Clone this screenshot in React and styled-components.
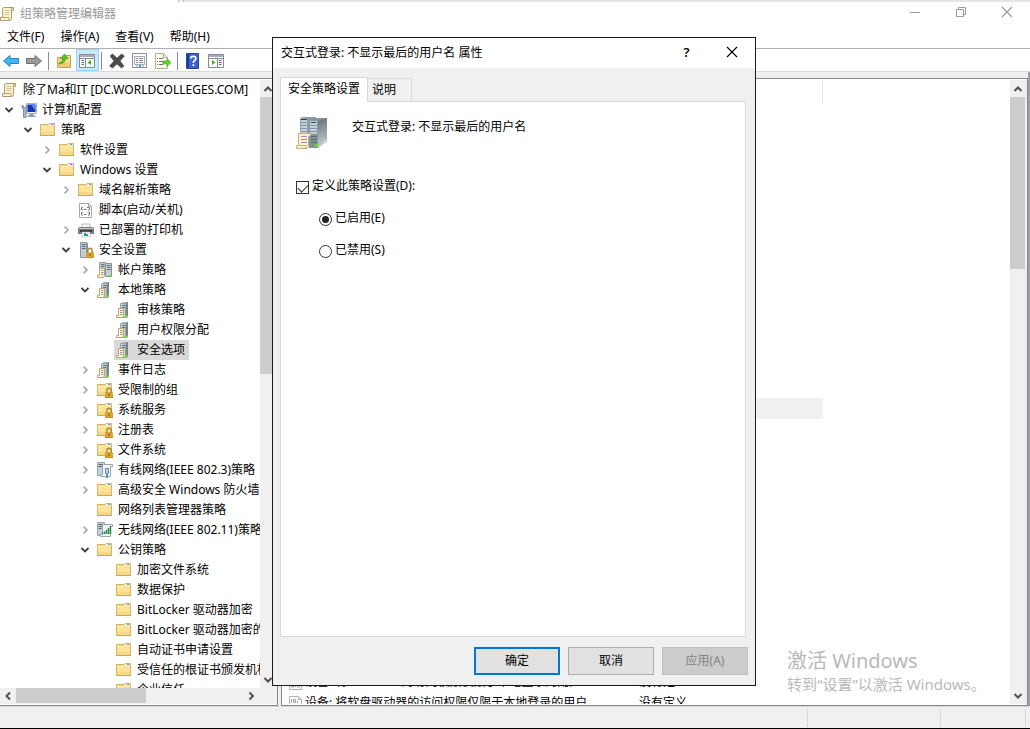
import React, { useState } from "react"
import styled, { createGlobalStyle, css } from "styled-components"

const GlobalStyle = createGlobalStyle`
  * {
    box-sizing: border-box;
  }

  body {
    margin: 0;
    overflow: hidden;
    background: #000;
    color: #000;
    font-family: "Noto Sans", "Noto Sans CJK SC", sans-serif;
    font-size: 12px;
    line-height: 20px;
  }

  button, input {
    font: inherit;
    color: inherit;
    margin: 0;
  }

  svg {
    display: block;
    flex: none;
  }
`

/* ---------- shared pieces ---------- */

const PlainButton = styled.button`
  display: flex;
  align-items: center;
  padding: 0;
  border: 0;
  background: transparent;
  white-space: nowrap;
`

/* ---------- window ---------- */

const Window = styled.div`
  position: relative;
  display: flex;
  flex-direction: column;
  height: calc(100vh - 1px);
  background: #f0f0f0;
`

const TopStrip = styled.div`
  display: flex;
  flex: none;
  height: 2px;
  background: #e5e5e5;
`

const StripTab = styled.div`
  width: ${props => props.$width}px;
  background: ${props => props.$color};
  border-right: 1px solid #b4b4b4;
`

const TitleBar = styled.header`
  display: flex;
  flex: none;
  height: 24px;
  background: #fff;
  color: #999;
`

const TitleText = styled.h1`
  display: flex;
  flex: 1;
  align-items: center;
  gap: 4px;
  margin: 0;
  font-size: 12px;
  font-weight: 400;
`

const CaptionButton = styled(PlainButton)`
  justify-content: center;
  width: ${props => props.$width || 46}px;
  height: ${props => props.$height || 20}px;
`

const MenuBar = styled.nav`
  display: flex;
  flex: none;
  gap: 16px;
  height: 23px;
  padding-left: 7px;
  background: #fff;
  border-bottom: 1px solid #b0b0b0;
`

const Toolbar = styled.div`
  display: flex;
  flex: none;
  height: 23px;
  background: #fff;
  border-bottom: 1px solid #dadada;
`

const ToolButton = styled(PlainButton)`
  justify-content: center;
  width: 23px;
  height: 22px;
  padding: 2px 1px 0 0;
  ${props =>
      props.$active &&
      css`
          background: #cce8ff;
          border: 1px solid #99d1ff;
      `}
`

const Separator = styled.div`
  width: 1px;
  height: 18px;
  margin: 3px 4px 0 2px;
  background: #8c8c8c;
`

const Content = styled.main`
  display: flex;
  flex: 1;
  gap: 3px;
  min-height: 0;
  padding: 6px 2px 0 0;
  background: linear-gradient(to left, #a0a0a4 2px, #f0f0f0 2px);
`

const Pane = styled.section`
  display: flex;
  min-width: 0;
  background: #fff;
  border: 1px solid #828790;
  padding: 1px 0;
`

const TreePane = styled(Pane)`
  flex: 0 0 278px;
  flex-direction: column;
  border-left: 0;
`

const ListPane = styled(Pane)`
  flex: 1;
`

/* ---------- scroll bars ---------- */

const Track = styled.div`
  display: flex;
  flex: none;
  flex-direction: ${props => (props.$horizontal ? "row" : "column")};
  ${props => (props.$horizontal ? "height: 15px;" : "width: 17px;")}
  background: #f0f0f0;
`

const TrackButton = styled(PlainButton)`
  flex: none;
  justify-content: center;
  width: ${props => (props.$horizontal ? 16 : 15)}px;
  height: ${props => (props.$horizontal ? 15 : 17)}px;

  &:last-child {
    margin-${props => (props.$horizontal ? "left" : "top")}: auto;
  }
`

const Thumb = styled.div`
  flex: none;
  background: #cdcdcd;
  ${props =>
      props.$horizontal
          ? `width: ${props.$size}px;`
          : `height: ${props.$size}px; width: 15px;`}
`

/* ---------- tree ---------- */

const TreeArea = styled.div`
  display: flex;
  flex: 1;
  min-height: 0;
`

const Tree = styled.ul`
  flex: 1;
  min-width: 0;
  margin: 0;
  padding: 0;
  overflow: hidden;
  list-style: none;
`

const TreeRow = styled.li`
  display: flex;
  height: 20px;
  padding-left: ${props => (props.$level ? props.$level * 19 - 18 : 0)}px;
`

const Expander = styled(PlainButton)`
  flex: none;
  justify-content: center;
  width: 16px;
  margin-right: 2px;
`

const ExpanderSpace = styled.span`
  flex: none;
  width: 16px;
  margin-right: 2px;
`

const TreeLabel = styled(PlainButton)`
  gap: 5px;
  padding: 0 4px 0 2px;
  background: ${props => (props.$selected ? "#d9d9d9" : "transparent")};
`

const HScrollRow = styled.div`
  display: flex;
  flex: none;
  flex-direction: column;
  height: 16px;
  padding-right: 18px;
  background: #f0f0f0;
`

/* ---------- policy list ---------- */

const ListArea = styled.div`
  flex: 1;
  min-width: 0;
  overflow: hidden;
`

const PolicyTable = styled.table`
  width: 541px;
  table-layout: fixed;
  border-collapse: separate;
  border-spacing: 0;

  th {
    height: 24px;
    padding: 0;
    border-right: 1px solid #e5e5e5;
  }

  td {
    height: 21px;
    padding: 0 0 0 6px;
    white-space: nowrap;
  }
`

const PolicyRow = styled.tr`
  background: ${props => (props.$selected ? "#f0f0f0" : "#fff")};
`

const PolicyName = styled.span`
  display: flex;
  align-items: center;
  height: 21px;
  gap: 1px;
`

/* ---------- status bar ---------- */

const StatusBar = styled.footer`
  display: flex;
  flex: none;
  height: 22px;
  padding: 2px 4px 1px 0;
  background: #f0f0f0;
  border-top: 1px solid #d7d7d7;
`

const StatusCell = styled.div`
  flex: ${props => (props.$width ? `0 0 ${props.$width}px` : "1")};
  border-right: 1px solid #d7d7d7;
`

const Watermark = styled.aside`
  position: absolute;
  right: 45px;
  bottom: 33px;
  width: 198px;
  color: #b9b9b9;
  font-size: 15px;
  line-height: 22px;
  white-space: nowrap;
`

const WatermarkTitle = styled.div`
  font-size: 20px;
  line-height: 24px;
`

/* ---------- dialog ---------- */

const Dialog = styled.div`
  position: absolute;
  top: 37px;
  left: 272px;
  display: flex;
  flex-direction: column;
  width: 484px;
  height: 649px;
  background: #f0f0f0;
  border: 1px solid #1a1a1a;
`

const DialogTitleBar = styled.div`
  display: flex;
  flex: none;
  height: 30px;
  padding: 0 1px 0 8px;
  background: #fff;
`

const DialogTitle = styled.h2`
  flex: 1;
  margin: 0;
  font-size: 12px;
  font-weight: 400;
  line-height: 30px;
`

const HelpMark = styled.span`
  font-size: 13px;
  font-weight: 600;
`

const Tabs = styled.div`
  display: flex;
  flex: none;
  align-items: flex-end;
  height: 33px;
  padding-left: 7px;
`

const Tab = styled.button`
  position: relative;
  height: ${props => (props.$active ? 25 : 23)}px;
  margin: 0 0 ${props => (props.$active ? -1 : 0)}px;
  padding: ${props => (props.$active ? "0 7px 2px 7px" : "0 15px 0 4px")};
  background: ${props => (props.$active ? "#fff" : "#f0f0f0")};
  border: 1px solid #d9d9d9;
  border-bottom: 0;
  border-left-width: ${props => (props.$active ? 1 : 0)}px;
  white-space: nowrap;
`

const Page = styled.div`
  flex: 1;
  margin: 0 9px 0 7px;
  padding: 15px;
  background: #fff;
  border: 1px solid #d9d9d9;
`

const PolicyHeading = styled.div`
  display: flex;
  gap: 24px;
  margin-bottom: 28px;
`

const Field = styled.label`
  display: flex;
  align-items: center;
  gap: 3px;
  width: max-content;
  height: 20px;
  margin: 0 0 12px ${props => (props.$nested ? 23 : 0)}px;
`

const FieldText = styled.span`
  padding-bottom: 2px;
`

const Checkbox = styled.input`
  appearance: none;
  width: 13px;
  height: 13px;
  border: 1px solid #333;
  background: #fff;

  &:checked::after {
    content: "";
    display: block;
    width: 9px;
    height: 5px;
    margin: 2px 0 0 1px;
    border: solid #333;
    border-width: 0 0 1px 1px;
    transform: rotate(-45deg);
  }
`

const Radio = styled.input`
  appearance: none;
  width: 13px;
  height: 13px;
  padding: 2px;
  border: 1px solid #333;
  border-radius: 50%;
  background: #fff;

  &:checked::after {
    content: "";
    display: block;
    width: 7px;
    height: 7px;
    border-radius: 50%;
    background: #222;
  }
`

const DialogButtons = styled.div`
  display: flex;
  flex: none;
  justify-content: flex-end;
  gap: 8px;
  padding: 10px 7px;
`

const DialogButton = styled.button`
  width: 86px;
  height: 28px;
  padding: 0 0 1px;
  background: #e1e1e1;
  border: ${props => (props.$primary ? "2px solid #0078d7" : "1px solid #adadad")};

  &:disabled {
    color: #838383;
    background: #ccc;
    border-color: #bfbfbf;
  }
`

/* ---------- icons ---------- */

const Svg = ({ size = 16, children }) => (
    <svg width={size} height={size} viewBox="0 0 16 16" fill="none" aria-hidden="true">
        {children}
    </svg>
)

const chevrons = {
    up: "M4.5 10 8 6.5 11.5 10",
    down: "M4.5 6 8 9.5 11.5 6",
    left: "M10 4.5 6.5 8 10 11.5",
    right: "M6.5 4.5 10 8 6.5 11.5",
}

const Chevron = ({ to, color = "#505050", width = 2 }) => (
    <Svg>
        <path d={chevrons[to]} stroke={color} strokeWidth={width} />
    </Svg>
)

const FolderShape = () => (
    <>
        <path d="M.5 13.5V2.5H8L9 1.5H14.5V13.5Z" fill="#f3d58a" stroke="#d6b468" />
        <path d="M9.5 2.5H13" stroke="#fff" />
        <path d="M11 2.5H13" stroke="#3d9be0" />
        <path d="M1 4H8.5L9.5 3H14V13H1Z" fill="#fde397" />
        <path d="M1 4.5H8.5L9.5 3.5H14" stroke="#fff0bd" />
        <path d="M1 10H14V13H1Z" fill="#f6d885" />
        <path d="M0 13.5H15" stroke="#c9a75c" />
    </>
)

const LockShape = () => (
    <>
        <path d="M9.8 11V8.5a2.2 2.2 0 0 1 4.4 0V11" stroke="#a98a3c" strokeWidth="1.4" />
        <path d="M8 10.5H16V16H8Z" fill="#c98f12" />
        <path d="M8 12H16M8 14H16" stroke="#edbd3f" />
        <path d="M12 11.5V14" stroke="#7a5405" />
    </>
)

const ServerShape = () => (
    <>
        <path d="M4 2 7 0H12V14L10 16H4Z" fill="#a7b5be" />
        <path d="M10 1 12 0V14L10 16Z" fill="#78858d" />
        <path d="M4.5 1.5H9.5V15.5H4.5Z" fill="#c6d2d9" stroke="#97a5ad" />
        <path d="M6 3.5H9M6 5.5H9" stroke="#5c6d76" />
        <path d="M9 13H11.5V15.5H9Z" fill="#61e515" />
    </>
)

const PaperShape = () => (
    <>
        <path d="M2.5 6.5H7.5V13.5L6.5 15.5H.5V13.5H2.5Z" fill="#fff8e2" stroke="#b8a478" />
        <path d="M4 8.5H6.5M4 10.5H6.5M4 12.5H6.5" stroke="#9b957e" />
    </>
)

const ScrollShape = () => (
    <>
        <path
            d="M4 1.5H13.5V4.5H11.5V12.5Q11.5 14.5 9.5 14.5H.5V11.5H2.5V3.5Q2.5 1.5 4 1.5Z"
            fill="#fff3cf"
            stroke="#b39d6f"
        />
        <path d="M11.5 4.5V2.5H13.5M2.5 11.5H9V14.5" stroke="#bba46f" />
        <path d="M4.5 4.5H9.5M4.5 6.5H9.5M4.5 8.5H9.5" stroke="#d3c49c" />
    </>
)

const icons = {
    scroll: <ScrollShape />,
    folder: <FolderShape />,
    lockedFolder: (
        <>
            <FolderShape />
            <LockShape />
        </>
    ),
    computer: (
        <>
            <path d="M5.5 1.5H15.5V11.5H5.5Z" fill="#e9edf4" stroke="#a9aeb8" />
            <path d="M6.5 2.5H14.5V10H6.5Z" fill="#1835b5" />
            <path d="M10 2.5H14.5V9Z" fill="#5d8bf0" />
            <path d="M8.5 12H12.5V13.5H14.5V15H6.5V13.5H8.5Z" fill="#9097a0" />
            <path d="M1 3.5V6L2.5 7V15.5H5V7L6.5 6V3.5H5.2V5.5H2.3V3.5Z" fill="#a8c0d3" stroke="#5c7386" strokeWidth=".7" />
        </>
    ),
    script: (
        <>
            <path d="M1.5 1.5H10.5L13.5 4.5V15.5H1.5Z" fill="#fff" stroke="#a6a6a6" />
            <path d="M10.5 1.5V4.5H13.5" stroke="#a6a6a6" />
            <path d="M5 5.5H3.5V8H5M9 5.5H11.5V8H10M5 10.5H3.5V13H5M9.5 10.5H11.5V13H10M6 7.5H8.5M6 12.5H8.5" stroke="#7d7d88" />
        </>
    ),
    printer: (
        <>
            <path d="M4 2H12V6H4Z" fill="#f6f6f6" stroke="#aaa" strokeWidth=".8" />
            <path d="M0 6 2 5H14L16 6V12H0Z" fill="#7b8085" />
            <path d="M1 6.5H15" stroke="#c3c7cb" />
            <path d="M2 9H14" stroke="#3a3d40" strokeWidth="2" />
            <path d="M4 10H12V15H4Z" fill="#fff" stroke="#aaa" strokeWidth=".6" />
            <path d="M6 11H8V14H6Z" fill="#2694c5" />
            <path d="M8 12H10V14H8Z" fill="#2da35c" />
        </>
    ),
    lockedServer: (
        <>
            <path d="M2.5.5H8.5V15.5H2.5Z" fill="#c1cdd4" stroke="#8b989f" />
            <path d="M8 1H10V15H8Z" fill="#8b979e" />
            <path d="M4 2.5H7.5M4 4.5H7.5M4 6.5H7.5" stroke="#54656f" />
            <LockShape />
        </>
    ),
    serverPaper: (
        <>
            <ServerShape />
            <PaperShape />
        </>
    ),
    servers: (
        <>
            <path d="M2.5.5H8.5V12H2.5Z" fill="#bfcbd3" stroke="#8f9ca4" />
            <path d="M4 2.5H7.5M4 4.5H7.5" stroke="#5f7079" />
            <path d="M8.5 1.5H14.5V14.5H8.5Z" fill="#c3d0d7" stroke="#839099" />
            <path d="M10 3.5H13.5M10 5.5H13.5M10 7.5H13.5" stroke="#5f7079" />
            <path d="M12 13H14.5V15H12Z" fill="#61e515" />
            <PaperShape />
        </>
    ),
    wired: (
        <>
            <path d="M.5.5H7.5V13.5H.5Z" fill="#c3cfd6" stroke="#9aa5ab" />
            <path d="M1.5 2.5H5.5M1.5 4.5H5.5" stroke="#54646e" />
            <path d="M5.5 2.5H15.5V4.5H13.5V14.5H3.5V12.5H5.5Z" fill="#f1f3f5" stroke="#9fa5aa" />
            <path d="M8.5 6.5H11.5V11.5H8.5Z" fill="#c7d7e6" stroke="#6d85a8" />
            <path d="M10 11V16" stroke="#4c97d6" strokeWidth="2" />
        </>
    ),
    wireless: (
        <>
            <path d="M.5.5H7.5V13.5H.5Z" fill="#c3cfd6" stroke="#9aa5ab" />
            <path d="M1.5 2.5H5.5M1.5 4.5H5.5M1.5 6.5H4.5" stroke="#54646e" />
            <path d="M5.5 2.5H15.5V4.5H13.5V14.5H3.5V12.5H5.5Z" fill="#eef3ec" stroke="#9fa5aa" />
            <path d="M5.5 12V10.5M7.5 12V9.5M9.5 12V8M11.5 12V6M13.5 12V4" stroke="#208443" strokeWidth="1.4" />
        </>
    ),
    policy: (
        <>
            <path d="M1.5 1.5H10.5L13.5 4.5V15.5H1.5Z" fill="#fff" stroke="#b4b4b4" />
            <path d="M10.5 1.5V4.5H13.5" stroke="#b4b4b4" />
            <path d="M3.5 4V7.5M5.5 4.5H7.5V7.5H5.5ZM9.5 6V8M3.5 10H5.5V13H3.5ZM7.5 9.5V13M9.5 10H11.5V13H9.5Z" stroke="#9a9a9a" />
        </>
    ),
    back: (
        <path d="M.5 8 7 2.5V5.5H15.5V10.5H7V13.5Z" fill="#3fb6f2" stroke="#2a7fbe" />
    ),
    forward: (
        <path d="M15.5 8 9 2.5V5.5H.5V10.5H9V13.5Z" fill="#9a9a9a" stroke="#707070" />
    ),
    folderUp: (
        <>
            <path d="M1.5 14.5V4.5H8L9.5 2.5H14.5V14.5Z" fill="#f6d98c" stroke="#c7a255" />
            <path d="M2 10H14V14H2Z" fill="#efca74" />
            <path d="M3 10Q7 9 7 5.5H4.5L8.5 1 12 5.5H9.5Q9 10.5 3 11Z" fill="#54c91b" stroke="#2d8b0a" strokeWidth=".6" />
        </>
    ),
    treeView: (
        <>
            <path d="M.5 1.5H15.5V14.5H.5Z" fill="#fff" stroke="#858c97" />
            <path d="M1 2H15V4H1Z" fill="#a5adba" />
            <path d="M1 5.5H15M6.5 6V14" stroke="#858c97" />
            <path d="M2.5 7.5H5M2.5 9.5H5M2.5 11.5H5" stroke="#606a78" />
            <path d="M12 7V12L8.5 9.5Z" fill="#39b51b" />
        </>
    ),
    remove: (
        <path
            d="M1 3 3.5 1 8 5 12.5 1 15.5 3 11 8 15 13 12.5 15 8 11 3.5 15 .5 13 5 8Z"
            fill="#4c4c4c"
            stroke="#333"
            strokeWidth=".5"
        />
    ),
    properties: (
        <>
            <path d="M.5.5H14.5V14.5H.5Z" fill="#fff" stroke="#8b8f96" />
            <path d="M2.5 3.5H12.5V11.5H2.5Z" fill="#f4f5f7" stroke="#a4a8af" />
            <path d="M4 5.5H6M7 5.5H11M4 7.5H6M7 7.5H11M4 9.5H6M7 9.5H11" stroke="#8b909a" />
            <path d="M4 13H6M10 13H12" stroke="#999" />
            <path d="M7 13H9" stroke="#21b7e8" strokeWidth="2" />
        </>
    ),
    exportList: (
        <>
            <path d="M.5.5H8.5L12.5 4.5V15.5H.5Z" fill="#fffbea" stroke="#b5ac92" />
            <path d="M8.5.5V4.5H12.5" stroke="#b5ac92" />
            <path d="M2 5.5H3M4 5.5H8M2 8.5H3M4 8.5H8M2 11.5H3M4 11.5H8" stroke="#6d6b7d" />
            <path d="M8 8H12V5.5L16 9.5 12 13.5V11H8Z" fill="#62d331" stroke="#39a715" strokeWidth=".6" />
        </>
    ),
    help: (
        <>
            <path d="M1.5.5H13.5V15.5H1.5Z" fill="#3a62cf" stroke="#2a449a" />
            <path d="M2 1H4V15H2Z" fill="#1f3b98" />
            <path d="M5.7 5.5Q5.7 3.3 8.3 3.3T10.9 5.5Q10.9 7 9.3 7.8 8.3 8.4 8.3 10" stroke="#fff" strokeWidth="1.7" />
            <path d="M7.5 11.2H9.3V13H7.5Z" fill="#fff" />
        </>
    ),
    actionPane: (
        <>
            <path d="M.5 1.5H15.5V14.5H.5Z" fill="#fff" stroke="#858c97" />
            <path d="M1 2H15V4H1Z" fill="#a5adba" />
            <path d="M1 5.5H15M9.5 6V14" stroke="#858c97" />
            <path d="M11 7.5H13.5M11 9.5H13.5M11 11.5H13.5" stroke="#606a78" />
            <path d="M4 7V12L7.5 9.5Z" fill="#39b51b" />
        </>
    ),
    minimize: <path d="M3 8.5H13" stroke="#999" />,
    restore: <path d="M3.5 5.5H10.5V12.5H3.5ZM5.5 5V3.5H12.5V10.5H11" stroke="#999" />,
    close: <path d="M3 3 13 13M13 3 3 13" stroke="currentColor" strokeWidth="1.1" />,
}

const Icon = ({ name }) => <Svg>{icons[name]}</Svg>

const ServerGroup = () => (
    <svg width="32" height="32" viewBox="0 0 32 32" fill="none" aria-hidden="true">
        <path d="M4 1 8 0H20V26H4Z" fill="#8c9aa2" />
        <path d="M4.5 1.5H11.5V24.5H4.5Z" fill="#c3d1d9" stroke="#94a3ac" />
        <path d="M5 2.5H11" stroke="#34444c" />
        <path d="M5 5.5H11M5 8.5H11M5 11.5H11M5 14.5H11" stroke="#8798a2" />
        <path d="M13 3 21 1H31V24L22 31H13Z" fill="#85939b" />
        <path d="M22 4 31 1V24L22 31Z" fill="url(#side)" />
        <path d="M13.5 3.5H21.5V30.5H13.5Z" fill="#c0cfd7" stroke="#8796a0" />
        <path d="M15 5.5H20" stroke="#34444c" />
        <path d="M14 8.5H21M14 11.5H21M14 14.5H21" stroke="#8798a2" />
        <path d="M14 17H21V30H14Z" fill="#7f919b" />
        <path d="M15 19.5H21M15 22.5H21M15 25.5H21" stroke="#596b76" />
        <path d="M19 27H22V30H19Z" fill="#61e515" />
        <path d="M25 26 30 22M25 28 30 24" stroke="#d0d6d9" />
        <path d="M2.5 16.5H14.5V19H12.5V29.5L11 31.5H.5V28.5H2.5Z" fill="#fff0c9" stroke="#c4af7c" />
        <path d="M5 19.5H11M5 22.5H11M5 25.5H11" stroke="#9990b2" />
        <path d="M3 28.5H10V31" stroke="#c7af77" />
        <defs>
            <linearGradient id="side" x1="22" y1="2" x2="31" y2="28" gradientUnits="userSpaceOnUse">
                <stop stopColor="#69757b" />
                <stop offset="1" stopColor="#c5ccd0" />
            </linearGradient>
        </defs>
    </svg>
)

/* ---------- data ---------- */

const menus = ["文件(F)", "操作(A)", "查看(V)", "帮助(H)"]

const tools = [
    ["back", "后退"],
    ["forward", "前进"],
    null,
    ["folderUp", "上一级"],
    ["treeView", "显示/隐藏控制台树"],
    null,
    ["remove", "删除"],
    ["properties", "属性"],
    ["exportList", "导出列表"],
    null,
    ["help", "帮助"],
    ["actionPane", "显示/隐藏操作窗格"],
]

// level, icon, text, expander state
const nodes = [
    [0, "scroll", "除了Ma和IT [DC.WORLDCOLLEGES.COM]"],
    [1, "computer", "计算机配置", "open"],
    [2, "folder", "策略", "open"],
    [3, "folder", "软件设置", "closed"],
    [3, "folder", "Windows 设置", "open"],
    [4, "folder", "域名解析策略", "closed"],
    [4, "script", "脚本(启动/关机)"],
    [4, "printer", "已部署的打印机", "closed"],
    [4, "lockedServer", "安全设置", "open"],
    [5, "servers", "帐户策略", "closed"],
    [5, "serverPaper", "本地策略", "open"],
    [6, "serverPaper", "审核策略"],
    [6, "serverPaper", "用户权限分配"],
    [6, "serverPaper", "安全选项"],
    [5, "serverPaper", "事件日志", "closed"],
    [5, "lockedFolder", "受限制的组", "closed"],
    [5, "lockedFolder", "系统服务", "closed"],
    [5, "lockedFolder", "注册表", "closed"],
    [5, "lockedFolder", "文件系统", "closed"],
    [5, "wired", "有线网络(IEEE 802.3)策略", "closed"],
    [5, "folder", "高级安全 Windows 防火墙", "closed"],
    [5, "folder", "网络列表管理器策略"],
    [5, "wireless", "无线网络(IEEE 802.11)策略", "closed"],
    [5, "folder", "公钥策略", "open"],
    [6, "folder", "加密文件系统"],
    [6, "folder", "数据保护"],
    [6, "folder", "BitLocker 驱动器加密"],
    [6, "folder", "BitLocker 驱动器加密的"],
    [6, "folder", "自动证书申请设置"],
    [6, "folder", "受信任的根证书颁发机构"],
    [6, "folder", "企业信任"],
]

const SELECTED_POLICY = 14

const policies = Array.from({ length: 27 }, () => null).concat([
    { name: "设备: 将 CD-ROM 的访问权限仅限于本地登录的用户", setting: "没有定义" },
    { name: "设备: 将软盘驱动器的访问权限仅限于本地登录的用户", setting: "没有定义" },
])

/* ---------- components ---------- */

const ScrollBar = ({ horizontal, size }) => (
    <Track $horizontal={horizontal}>
        <TrackButton $horizontal={horizontal} tabIndex={-1} aria-label={horizontal ? "向左" : "向上"}>
            <Chevron to={horizontal ? "left" : "up"} />
        </TrackButton>
        <Thumb $horizontal={horizontal} $size={size} />
        <TrackButton $horizontal={horizontal} tabIndex={-1} aria-label={horizontal ? "向右" : "向下"}>
            <Chevron to={horizontal ? "right" : "down"} />
        </TrackButton>
    </Track>
)

const ConsoleTree = () => {
    const [selected, setSelected] = useState("安全选项")

    return (
        <TreePane>
            <TreeArea>
                <Tree>
                    {nodes.map(([level, icon, text, state]) => (
                        <TreeRow key={text} $level={level}>
                            {state && (
                                <Expander aria-label={text} aria-expanded={state === "open"}>
                                    <Chevron
                                        to={state === "open" ? "down" : "right"}
                                        color={state === "open" ? "#404040" : "#a6a6a6"}
                                        width={state === "open" ? 1.8 : 1.6}
                                    />
                                </Expander>
                            )}
                            {!state && level > 0 && <ExpanderSpace />}
                            <TreeLabel $selected={text === selected} onClick={() => setSelected(text)}>
                                <Icon name={icon} />
                                {text}
                            </TreeLabel>
                        </TreeRow>
                    ))}
                </Tree>
                <ScrollBar size={277} />
            </TreeArea>
            <HScrollRow>
                <ScrollBar horizontal size={130} />
            </HScrollRow>
        </TreePane>
    )
}

const PolicyList = () => (
    <ListPane>
        <ListArea>
            <PolicyTable>
                <colgroup>
                    <col width="351" />
                    <col width="190" />
                </colgroup>
                <thead>
                    <tr>
                        <th scope="col" />
                        <th scope="col" />
                    </tr>
                </thead>
                <tbody>
                    {policies.map((policy, index) => (
                        <PolicyRow key={index} $selected={index === SELECTED_POLICY}>
                            <td>
                                {policy && (
                                    <PolicyName>
                                        <Icon name="policy" />
                                        {policy.name}
                                    </PolicyName>
                                )}
                            </td>
                            <td>{policy && policy.setting}</td>
                        </PolicyRow>
                    ))}
                </tbody>
            </PolicyTable>
        </ListArea>
        <ScrollBar size={172} />
    </ListPane>
)

const PropertiesDialog = () => {
    const [defined, setDefined] = useState(true)
    const [value, setValue] = useState("enabled")

    return (
        <Dialog role="dialog" aria-labelledby="dialog-title">
            <DialogTitleBar>
                <DialogTitle id="dialog-title">交互式登录: 不显示最后的用户名 属性</DialogTitle>
                <CaptionButton $width={45} $height={28} aria-label="帮助">
                    <HelpMark>?</HelpMark>
                </CaptionButton>
                <CaptionButton $width={45} $height={28} aria-label="关闭">
                    <Icon name="close" />
                </CaptionButton>
            </DialogTitleBar>
            <Tabs role="tablist">
                <Tab role="tab" aria-selected="true" $active>
                    安全策略设置
                </Tab>
                <Tab role="tab" aria-selected="false">
                    说明
                </Tab>
            </Tabs>
            <Page role="tabpanel">
                <PolicyHeading>
                    <ServerGroup />
                    <span>交互式登录: 不显示最后的用户名</span>
                </PolicyHeading>
                <Field>
                    <Checkbox type="checkbox" checked={defined} onChange={e => setDefined(e.target.checked)} />
                    <FieldText>定义此策略设置(D):</FieldText>
                </Field>
                <Field $nested>
                    <Radio
                        type="radio"
                        name="policy"
                        checked={value === "enabled"}
                        onChange={() => setValue("enabled")}
                    />
                    <FieldText>已启用(E)</FieldText>
                </Field>
                <Field $nested>
                    <Radio
                        type="radio"
                        name="policy"
                        checked={value === "disabled"}
                        onChange={() => setValue("disabled")}
                    />
                    <FieldText>已禁用(S)</FieldText>
                </Field>
            </Page>
            <DialogButtons>
                <DialogButton $primary>确定</DialogButton>
                <DialogButton>取消</DialogButton>
                <DialogButton disabled>应用(A)</DialogButton>
            </DialogButtons>
        </Dialog>
    )
}

const App = () => {
    return (
        <>
            <GlobalStyle />
            <Window>
                <TopStrip>
                    <StripTab $width={179} $color="#fff" />
                    <StripTab $width={5} $color="#eee" />
                </TopStrip>
                <TitleBar>
                    <TitleText>
                        <Icon name="scroll" />
                        组策略管理编辑器
                    </TitleText>
                    <CaptionButton aria-label="最小化">
                        <Icon name="minimize" />
                    </CaptionButton>
                    <CaptionButton aria-label="还原">
                        <Icon name="restore" />
                    </CaptionButton>
                    <CaptionButton aria-label="关闭">
                        <Icon name="close" />
                    </CaptionButton>
                </TitleBar>
                <MenuBar>
                    {menus.map(menu => (
                        <PlainButton key={menu}>{menu}</PlainButton>
                    ))}
                </MenuBar>
                <Toolbar role="toolbar">
                    {tools.map((tool, index) =>
                        tool ? (
                            <ToolButton key={index} aria-label={tool[1]} $active={tool[0] === "treeView"}>
                                <Icon name={tool[0]} />
                            </ToolButton>
                        ) : (
                            <Separator key={index} />
                        )
                    )}
                </Toolbar>
                <Content>
                    <ConsoleTree />
                    <PolicyList />
                </Content>
                <StatusBar>
                    <StatusCell />
                    <StatusCell $width={133} />
                    <StatusCell $width={85} />
                </StatusBar>
                <Watermark>
                    <WatermarkTitle>激活 Windows</WatermarkTitle>
                    <div>转到“设置”以激活 Windows。</div>
                </Watermark>
                <PropertiesDialog />
            </Window>
        </>
    )
}

export default App
